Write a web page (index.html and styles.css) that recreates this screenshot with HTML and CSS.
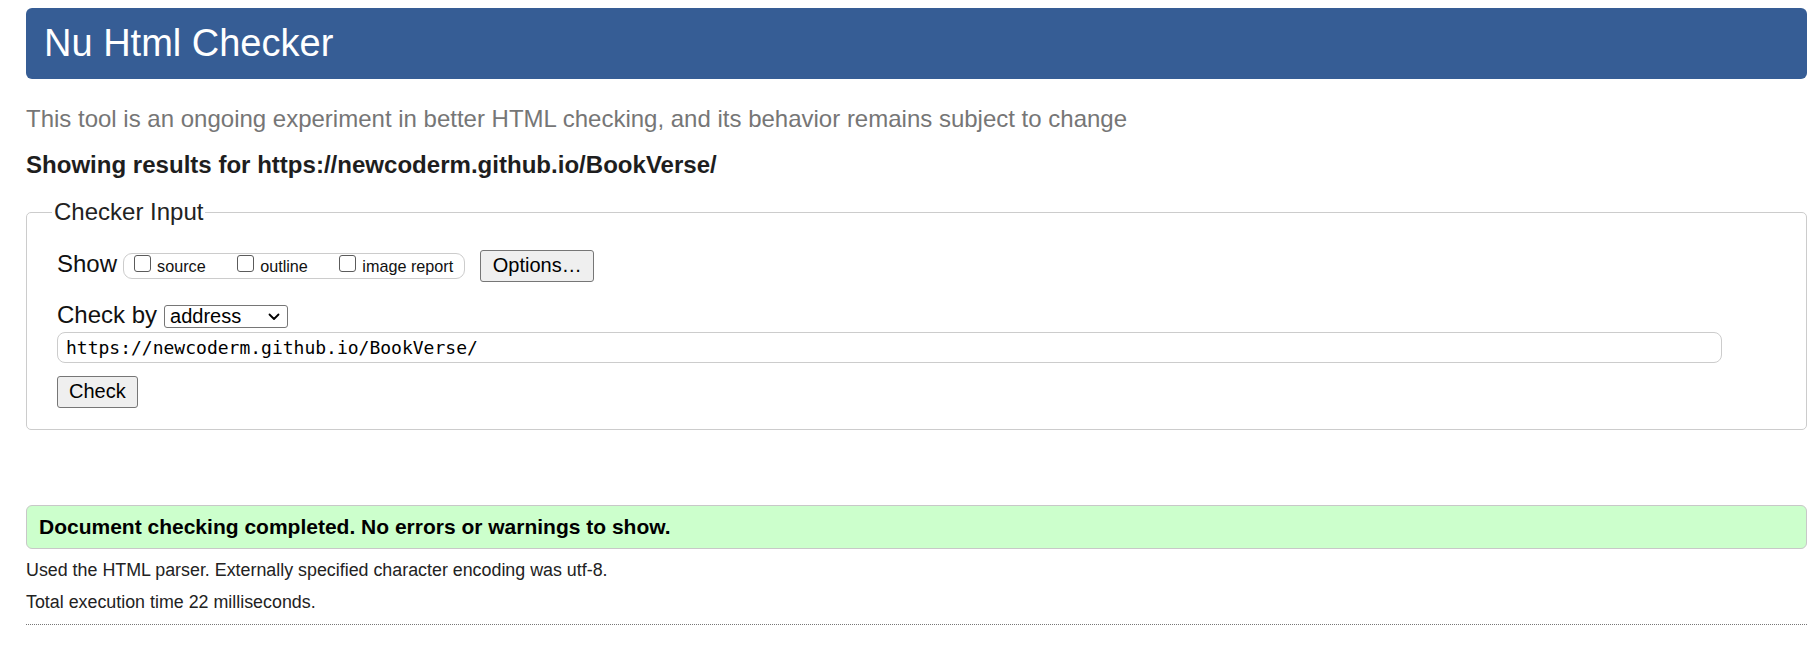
FILE: index.html
```html
<!DOCTYPE html>
<html lang="en">
<head>
<meta charset="utf-8">
<title>Nu Html Checker</title>
<link rel="stylesheet" href="styles.css">
</head>
<body>
<h1 class="site-title">Nu Html Checker</h1>
<p class="about">This tool is an ongoing experiment in better HTML checking, and its behavior remains subject to change</p>
<p class="showing">Showing results for https://newcoderm.github.io/BookVerse/</p>
<form class="checker-form">
  <fieldset class="checker-input">
    <legend class="checker-legend">Checker Input</legend>
    <div class="row row-show">
      <span class="row-label">Show</span>
      <span class="opt-group">
        <label class="opt"><input type="checkbox" class="cb"><span class="opt-text">source</span></label>
        <label class="opt"><input type="checkbox" class="cb"><span class="opt-text">outline</span></label>
        <label class="opt"><input type="checkbox" class="cb"><span class="opt-text">image report</span></label>
      </span>
      <button type="button" class="btn btn-options">Options…</button>
    </div>
    <div class="row row-checkby">
      <span class="row-label row-label-by">Check by</span>
      <span class="select-wrap">
        <select class="select-by">
          <option>address</option>
        </select>
        <svg class="select-chev" width="12" height="8" viewBox="0 0 12 8" aria-hidden="true"><path d="M1.5 1.5 L6 6 L10.5 1.5" fill="none" stroke="#000" stroke-width="1.8" stroke-linecap="round" stroke-linejoin="round"/></svg>
      </span>
    </div>
    <input type="text" class="url-input" value="https://newcoderm.github.io/BookVerse/">
    <div class="row-submit">
      <button type="button" class="btn btn-check">Check</button>
    </div>
  </fieldset>
</form>
<div class="result-ok">Document checking completed. No errors or warnings to show.</div>
<p class="details">Used the HTML parser. Externally specified character encoding was utf-8.</p>
<p class="details details-last">Total execution time 22 milliseconds.</p>
</body>
</html>
```
FILE: styles.css
```css
html, body {
  margin: 0;
  background: #fff;
}
body {
  padding: 8px 5px 0 26px;
  font-family: "Liberation Sans", Arial, sans-serif;
  color: #222;
}
.site-title {
  margin: 0;
  height: 71px;
  line-height: 71px;
  padding-left: 18px;
  font-size: 38px;
  font-weight: normal;
  color: #fff;
  background: #365d95;
  border-radius: 6px;
}
.about {
  margin: 26px 0 0;
  font-size: 24px;
  line-height: 28px;
  color: #767676;
}
.showing {
  margin: 18px 0 0;
  font-size: 24.05px;
  line-height: 28px;
  font-weight: bold;
  color: #1e1e1e;
}
.checker-form {
  margin: 0;
}
.checker-input {
  margin: 20px 0 0;
  padding: 0 30px 21px 30px;
  border: 1px solid #cccccc;
  border-radius: 5px;
  min-width: 0;
}
.checker-legend {
  margin-left: -5px;
  padding: 0 2px;
  font-size: 24px;
  line-height: 26px;
  color: #222;
}
.row {
  display: flex;
  align-items: baseline;
}
.row-show {
  margin-top: 24.5px;
}
.row-label {
  font-size: 24px;
  line-height: 26px;
  color: #111;
}
.opt-group {
  display: flex;
  align-items: baseline;
  box-sizing: border-box;
  height: 26px;
  margin-left: 6px;
  padding: 1px 11px 0 10px;
  border: 1px solid #cccccc;
  border-radius: 9px;
}
.opt {
  display: flex;
  align-items: baseline;
  margin-right: 31.5px;
}
.opt:last-child {
  margin-right: 0;
}
.cb {
  appearance: none;
  -webkit-appearance: none;
  box-sizing: border-box;
  width: 17px;
  height: 17px;
  margin: 0 6px 0 0;
  border: 1px solid #5b5b5b;
  border-radius: 3px;
  background: #fff;
}
.opt-text {
  font-size: 16.2px;
  line-height: 18px;
  color: #111;
}
.btn {
  font-family: "Liberation Sans", Arial, sans-serif;
  font-size: 20px;
  line-height: 28px;
  color: #000;
  background: #efefef;
  border: 1px solid #767676;
  border-radius: 3px;
  margin: 0;
}
.btn-options {
  margin-left: 15px;
  padding: 0 11.5px 2px;
}
.row-checkby {
  margin-top: 22px;
}
.row-label-by {
  line-height: 22px;
}
.select-wrap {
  position: relative;
  display: inline-block;
  margin-left: 7px;
}
.select-by {
  appearance: none;
  -webkit-appearance: none;
  box-sizing: border-box;
  width: 124px;
  height: 23px;
  margin: 0;
  padding: 0 0 0 5px;
  font-family: "Liberation Sans", Arial, sans-serif;
  font-size: 20px;
  line-height: 21px;
  color: #000;
  background: #fff;
  border: 1px solid #767676;
  border-radius: 3px;
}
.select-chev {
  position: absolute;
  right: 8px;
  top: 8px;
  pointer-events: none;
}
.url-input {
  display: block;
  box-sizing: border-box;
  width: 1665px;
  height: 31px;
  margin: 4px 0 0;
  padding: 0 8px;
  font-family: "DejaVu Sans Mono", "Liberation Mono", monospace;
  font-size: 18px;
  color: #000;
  border: 1px solid #cccccc;
  border-radius: 8px;
  outline: none;
}
.row-submit {
  margin-top: 13px;
  display: flex;
}
.btn-check {
  padding: 0 11px 2px;
}
.result-ok {
  margin-top: 75px;
  padding: 0 12px;
  height: 42px;
  line-height: 42px;
  font-size: 21px;
  font-weight: bold;
  color: #000;
  background: #ccffcc;
  border: 1px solid #c8c8c8;
  border-radius: 6px;
}
.details {
  margin: 11px 0 0;
  font-size: 17.85px;
  line-height: 20px;
  color: #222;
}
.details-last {
  margin-top: 12px;
  padding-bottom: 12px;
  border-bottom: 1px dotted #777;
}
```
